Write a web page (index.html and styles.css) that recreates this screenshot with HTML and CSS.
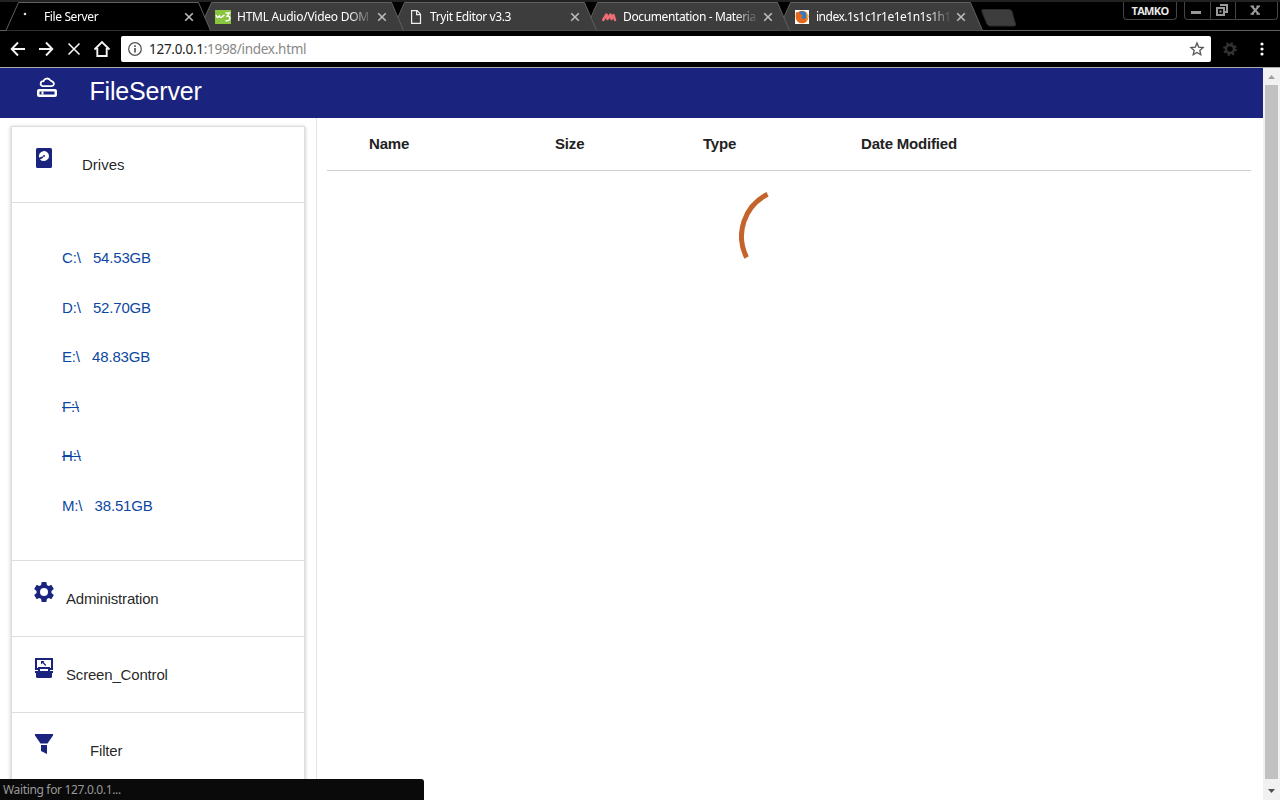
FILE: index.html
```html
<!DOCTYPE html>
<html lang="en">
<head>
<meta charset="utf-8">
<title>File Server</title>
<link rel="stylesheet" href="styles.css">
</head>
<body>
<svg class="defs" width="0" height="0">
  <symbol id="tab-shape" viewBox="0 0 205 29">
    <path d="M0 28.500L12.500.5H192.500L204.500 28.500"/>
  </symbol>
  <symbol id="close" viewBox="0 0 10 10"><path d="M1.200 1.200l7.600 7.600M8.800 1.200L1.200 8.800"/></symbol>
  <symbol id="gear" viewBox="0 0 24 24">
    <path d="M19.430 12.980c.04-.32.07-.64.07-.98s-.03-.66-.07-.98l2.110-1.650c.19-.15.24-.42.12-.64l-2-3.460c-.12-.22-.39-.3-.61-.22l-2.490 1c-.52-.4-1.080-.73-1.690-.98l-.38-2.650A.49.49 0 0 0 14 2h-4a.49.49 0 0 0-.49.42l-.38 2.650c-.61.25-1.170.59-1.690.98l-2.490-1c-.23-.09-.49 0-.61.22l-2 3.460c-.13.22-.07.49.12.64l2.110 1.650c-.04.32-.07.65-.07.98s.03.66.07.98l-2.110 1.650c-.19.15-.24.42-.12.64l2 3.460c.12.22.39.3.61.22l2.490-1c.52.4 1.080.73 1.690.98l.38 2.650c.03.24.24.42.49.42h4c.25 0 .46-.18.49-.42l.38-2.650c.61-.25 1.170-.59 1.690-.98l2.490 1c.23.09.49 0 .61-.22l2-3.460c.12-.22.07-.49-.12-.64zM12 16a4 4 0 1 1 0-8 4 4 0 0 1 0 8z"/>
  </symbol>
</svg>
<div class="browser">
  <header class="tabstrip">
    <div class="tabs">
      <div class="tab active">
        <svg class="shape"><use href="#tab-shape"/></svg>
        <span class="favicon"><svg width="16" height="16"><circle cx="3" cy="5" r="1.300" fill="#ddd"/></svg></span>
        <span class="label"><span class="t1">File Server</span></span>
        <svg class="close"><use href="#close"/></svg>
      </div>
      <div class="tab z4">
        <svg class="shape"><use href="#tab-shape"/></svg>
        <span class="favicon"><svg width="16" height="16" fill="none" stroke="#fff" stroke-width="1.400"><path d="M0 1h16v14H0z" fill="#8ac53e" stroke="none"/><path d="M1 6q1 4 3.500 1q1 3 3.500 0l1.500-1M10.500 4h4l-2.500 3q3 0 3 2.500q-.5 2.800-4.500 2"/></svg></span>
        <span class="label"><span class="t2">HTML Audio/Video DOM</span></span>
        <svg class="close"><use href="#close"/></svg>
      </div>
      <div class="tab z3">
        <svg class="shape"><use href="#tab-shape"/></svg>
        <span class="favicon"><svg width="16" height="16" fill="none" stroke="#eee" stroke-width="1.200"><path d="M3.600 1.600h5.500l3.400 3.600v9.200H3.600zM8.600 1.600v4h3.900"/></svg></span>
        <span class="label"><span class="t3">Tryit Editor v3.3</span></span>
        <svg class="close"><use href="#close"/></svg>
      </div>
      <div class="tab z2">
        <svg class="shape"><use href="#tab-shape"/></svg>
        <span class="favicon"><svg width="16" height="16" fill="none" stroke="#ee6e73" stroke-width="2.500" stroke-linejoin="round" stroke-linecap="round"><path d="M2.200 11L5.500 5.500 6.500 10 9.500 5.500 10.500 10 12.500 6 14 11"/></svg></span>
        <span class="label"><span class="t4">Documentation - Materia</span></span>
        <svg class="close"><use href="#close"/></svg>
      </div>
      <div class="tab z1">
        <svg class="shape"><use href="#tab-shape"/></svg>
        <span class="favicon"><svg width="16" height="16"><path d="M1 1h14v14H1z" fill="#fff"/><circle cx="8" cy="8" r="6.300" fill="#e66000"/><circle cx="8.600" cy="6.500" r="4.200" fill="#3a78c0"/><path d="M2 3l3 1 4 3-2 1 2 2c3 1 4-1 5-5 1 5-1 9-6 9S1 9 2 3z" fill="#e8691c"/><path d="M12 3c3 3 2 7 0 9 1-3 1-5 0-9z" fill="#ffc73b"/></svg></span>
        <span class="label"><span class="t5">index.1s1c1r1e1e1n1s1h1</span></span>
        <svg class="close"><use href="#close"/></svg>
      </div>
    </div>
    <svg class="newtab" width="36" height="18"><path d="M2 .5H28Q30 .5 31 2.500L34.500 15Q35 17 33 17H9Q7 17 6 15L.8 2.500Q.3.5 2 .5Z" fill="#3d3d3d" stroke="#2c2c2c"/></svg>
    <div class="window-controls">
      <span class="user">TAMKO</span>
      <span class="buttons">
        <svg width="25" height="17"><path d="M6 9h10v3H6z" fill="#999"/></svg>
        <svg width="25" height="17" fill="none" stroke="#999" stroke-width="2"><path d="M6 6h7v7H6zM9 3h7v7h-3"/><path d="M8.500 8.500h2v2h-2z" fill="#999" stroke="none"/></svg>
        <svg width="42" height="17" fill="none" stroke="#999" stroke-width="2"><path d="M16 4.500l6.500 7.500M22.500 4.500L16 12"/><path d="M14.500 4.300h3.500M20.500 4.300H24M14.500 12h3.500M20.500 12H24" stroke-width="1.400"/></svg>
      </span>
    </div>
  </header>
  <div class="toolbar">
    <svg class="nav" width="121" height="36" viewBox="0 31 121 36" fill="none" stroke="#f4f4f4" stroke-width="1.900">
      <path d="M25 49H12M18 42.500L11.700 49l6.300 6.500"/>
      <path d="M39 49h13M46 42.500l6.300 6.500-6.300 6.500"/>
      <path d="M68.500 43.500l11 11M79.500 43.500l-11 11" stroke-width="1.600"/>
      <path d="M94.500 49.500L102 42l7.500 7.500M97.300 48v8h9.400v-8"/>
    </svg>
    <div class="omnibox">
      <svg width="16" height="16" fill="none" stroke="#555" stroke-width="1.300"><circle cx="8" cy="8" r="6.300"/><path d="M8 7v4.500M8 4.300v1.600" stroke-width="1.700"/></svg>
      <span class="url"><b>127.0.0.1</b>:1998/index.html</span>
      <svg class="star" width="16" height="16" fill="none" stroke="#555" stroke-width="1.300"><path d="M8 2l1.700 4.100 4.400.4-3.300 2.900 1 4.300L8 11.400l-3.800 2.300 1-4.300L1.900 6.500l4.400-.4z"/></svg>
    </div>
    <svg class="ext" width="16" height="16" fill="none" stroke="#333"><circle cx="8" cy="8" r="4" stroke-width="2.400"/><circle cx="8" cy="8" r="5.900" stroke-width="2" stroke-dasharray="2.300 2.334"/></svg>
    <svg class="kebab" width="4" height="14" fill="#fff"><circle cx="2" cy="2" r="1.600"/><circle cx="2" cy="7" r="1.600"/><circle cx="2" cy="12" r="1.600"/></svg>
  </div>
  <div class="viewport">
    <div class="page">
      <div class="appbar">
        <svg class="logo" width="24" height="24" fill="none" stroke="#fff" stroke-width="1.800"><path d="M7.500 10.100h9.200a2.300 2.300 0 0 0 .5-4.500 2 2 0 0 0-1.600-.9 3.900 3.900 0 0 0-7.200.5A2.500 2.500 0 0 0 7.500 10.100z"/><path d="M4 13h16a2 2 0 0 1 2 2v4a2 2 0 0 1-2 2H4a2 2 0 0 1-2-2v-4a2 2 0 0 1 2-2zm.5 2.600v2.800h15v-2.800z" fill="#fff" fill-rule="evenodd" stroke="none"/><path d="M6.500 15.500h2v3h-2z" fill="#fff" stroke="none"/></svg>
        <span class="brand">FileServer</span>
      </div>
      <div class="content">
        <aside class="sidebar">
          <ul class="collapsible">
            <li class="item">
              <svg class="icon" width="24" height="24" fill="#1a237e"><path d="M5.500 2h13A1.500 1.500 0 0 1 20 3.500v17a1.500 1.500 0 0 1-1.500 1.500h-13A1.500 1.500 0 0 1 4 20.500v-17A1.500 1.500 0 0 1 5.500 2z"/><path d="M12 15a5 5 0 1 0-4.700-3.300l3.200-1.400.7 1.500L8 13.500l1.600 1.200z" fill="#fff"/><circle cx="12" cy="10" r="1"/></svg>
              <span class="text drives-label">Drives</span>
            </li>
            <li class="drives">
              <a><span>C:\</span><span>54.53GB</span></a>
              <a><span>D:\</span><span>52.70GB</span></a>
              <a><span>E:\</span><span>48.83GB</span></a>
              <a><s>F:\</s></a>
              <a><s>H:\</s></a>
              <a><span>M:\</span><span>38.51GB</span></a>
            </li>
            <li class="item">
              <svg class="icon" width="24" height="24" fill="#1a237e"><use href="#gear"/></svg>
              <span class="text">Administration</span>
            </li>
            <li class="item">
              <svg class="icon" width="24" height="24" fill="#1a237e"><path d="M3 2h18v12h-3v-3H6v3H3zM5 4v8h14V4z" fill-rule="evenodd"/><path d="M6 11h12v5H6zM8 13v2h8v-2z" fill-rule="evenodd"/><path d="M3 15h18v2h-1v3.500a1.500 1.500 0 0 1-1.500 1.500h-13A1.500 1.500 0 0 1 4 20.500V17H3zM8 15h8v.2H8z"/><path d="M9 5h3.500l-1.100 1.100 2.900 2.900-.9.900-2.900-2.900L9 8.500z"/></svg>
              <span class="text">Screen_Control</span>
            </li>
            <li class="item">
              <svg class="icon" width="24" height="24" fill="#1a237e"><path d="M3 2h18v1.500L15.500 11.500h-7L3 3.500zM9 13h6v9l-6-3z"/></svg>
              <span class="text filter-label">Filter</span>
            </li>
          </ul>
        </aside>
        <main class="files">
          <div class="table-head"><span>Name</span><span>Size</span><span>Type</span><span>Date Modified</span></div>
          <svg class="spinner" width="100" height="100" fill="none" stroke="#c4642a" stroke-width="5"><path d="M28.500 8.300A47 47 0 0 0 7.600 71.500"/></svg>
        </main>
      </div>
    </div>
    <div class="scrollbar">
      <svg width="17" height="17"><path d="M5 11h7L8.500 7z" fill="#a0a0a0"/></svg>
      <div class="thumb"></div>
      <svg width="17" height="21"><path d="M5 10h7l-3.500 4z" fill="#505050"/></svg>
    </div>
  </div>
  <div class="status"><span>Waiting for 127.0.0.1...</span></div>
</div>
</body>
</html>
```
FILE: styles.css
```css
* { box-sizing: border-box; }
body { margin: 0; overflow: hidden; background: #000; font-family: "Liberation Sans", Arial, sans-serif; }
.defs { position: absolute; }
.browser { width: 1280px; height: 800px; display: flex; flex-direction: column; position: relative; }
.tabstrip { height: 31px; flex: none; display: flex; border-top: 2px solid #222; padding-left: 6px; position: relative; background: linear-gradient(#606060, #606060) bottom / 100% 1px no-repeat #000; }
.tabs { display: flex; isolation: isolate; }
.tab { width: 193px; height: 29px; display: flex; align-items: center; padding-left: 16px; position: relative; font: 12px "Noto Sans", "Open Sans", sans-serif; color: #fff; }
.active { z-index: 5; }
.z4 { z-index: 4; }
.z3 { z-index: 3; }
.z2 { z-index: 2; }
.z1 { z-index: 1; }
.shape { position: absolute; left: 0; top: 0; width: 205px; height: 29px; fill: #3d3d3d; stroke: #606060; }
.active .shape { fill: #000; }
.favicon { width: 16px; height: 16px; flex: none; margin-right: 6px; position: relative; }
.favicon svg { display: block; }
.label { width: 134px; overflow: hidden; white-space: nowrap; position: relative; -webkit-mask-image: linear-gradient(90deg, #000 112px, transparent 136px); mask-image: linear-gradient(90deg, #000 112px, transparent 136px); }
.t1 { letter-spacing: -.380px; }
.t2 { letter-spacing: -.250px; }
.t3 { letter-spacing: -.380px; }
.t4 { letter-spacing: -.370px; }
.t5 { letter-spacing: -.500px; }
.close { width: 10px; height: 10px; margin-left: 6px; flex: none; position: relative; stroke: #bbb; stroke-width: 1.600; }
.newtab { margin: 7px 0 0 10px; }
.window-controls { margin-left: auto; display: flex; padding-right: 3px; height: 18px; gap: 7px; }
.user { width: 54px; border: 1px solid #444; border-top: 0; border-radius: 0 0 4px 4px; text-align: center; font: bold 11px/17px "Open Sans", sans-serif; letter-spacing: -0.650px; color: #e8e8e8; }
.buttons { display: flex; border: 1px solid #444; border-top: 0; border-radius: 0 0 4px 4px; }
.buttons svg + svg { border-left: 1px solid #444; }
.window-controls { padding-right: 2px; }
.toolbar { height: 37px; flex: none; display: flex; align-items: center; border-bottom: 1px solid #aaa; }
.omnibox { width: 1090px; height: 26px; background: #fff; border-radius: 2px; display: flex; align-items: center; padding: 0 6px; }
.url { margin-left: 6px; font: 13.500px "Noto Sans", sans-serif; letter-spacing: -.280px; color: #888; }
.url b { font-weight: 400; color: #222; }
.star { margin-left: auto; }
.ext { margin-left: 11px; }
.kebab { margin-left: 22px; }
.viewport { height: 732px; display: flex; }
.page { width: 1263px; background: #fff; display: flex; flex-direction: column; }
.appbar { height: 50px; flex: none; background: #1a237e; color: #fff; display: flex; padding-left: 35px; }
.logo { margin-top: 8px; }
.brand { margin-left: 30.500px; font-size: 25px; letter-spacing: -.180px; line-height: 47px; }
.content { flex: 1; min-height: 0; display: flex; }
.sidebar { width: 317px; border-right: 1px solid #e4e4e4; padding: 8px 11px 0 11px; overflow: hidden; }
.collapsible { list-style: none; margin: 0; padding: 0; height: 720px; border: 1px solid #ddd; box-shadow: 0 1px 4px rgba(0,0,0,.24); font-size: 15px; letter-spacing: -.180px; color: rgba(0,0,0,.87); }
.item { height: 76px; display: flex; padding-left: 20px; border-bottom: 1px solid #ddd; }
.icon { margin-top: 19px; flex: none; }
.text { margin-left: 10px; line-height: 76px; }
.drives-label { margin-left: 26px; letter-spacing: 0; }
.filter-label { margin-left: 34px; }
.drives { height: 358px; border-bottom: 1px solid #ddd; padding: 30px 0 0 50px; color: #0d47a1; }
.drives a { display: flex; gap: 12.300px; height: 49.600px; line-height: 50px; }
.files { width: 946px; padding: 0 12px 0 10px; }
.table-head { height: 53px; border-bottom: 1px solid #d0d0d0; display: grid; grid-template-columns: 186px 148px 158px auto; padding-left: 42px; font-size: 15px; font-weight: bold; letter-spacing: -.180px; line-height: 52px; color: #222; }
.spinner { display: block; margin: 15px 0 0 411.500px; }
.scrollbar { width: 17px; background: #f1f1f1; display: flex; flex-direction: column; align-items: center; }
.scrollbar svg { flex: none; }
.thumb { width: 13px; height: 694px; background: #c1c1c1; }
.status { position: absolute; left: 0; bottom: 0; width: 424px; height: 21px; background: #0a0a0a; border-radius: 0 3px 0 0; padding-left: 3px; font: 12px/21px "Noto Sans", sans-serif; letter-spacing: -.340px; color: #999; }
```
